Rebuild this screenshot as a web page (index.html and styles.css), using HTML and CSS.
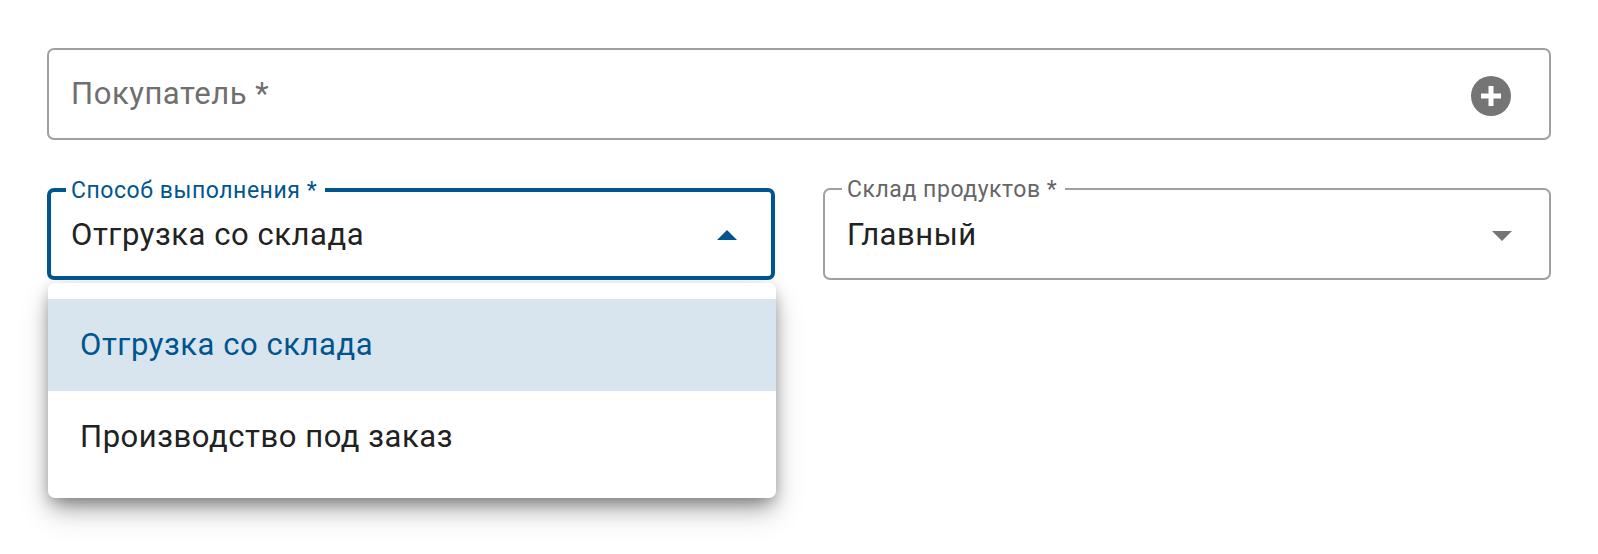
FILE: index.html
```html
<!DOCTYPE html>
<html lang="ru">
<head>
    <meta charset="UTF-8">
    <title>Заказ</title>
    <link rel="stylesheet" href="styles.css">
</head>
<body>
    <div class="form">
        <div class="field field-empty">
            <span class="placeholder">Покупатель *</span>
            <svg class="add-icon" viewBox="0 0 40 40" width="40" height="40">
                <circle cx="20" cy="20" r="20" fill="#757575"/>
                <path d="M17.5 10h5v7.5H30v5h-7.5V30h-5v-7.5H10v-5h7.5z" fill="#fff"/>
            </svg>
        </div>
        <div class="row">
            <div class="select-wrap">
                <fieldset class="field field-focused">
                    <legend>Способ выполнения *</legend>
                    <span class="value">Отгрузка со склада</span>
                    <span class="arrow arrow-up"></span>
                </fieldset>
                <ul class="options">
                    <li class="option is-selected">Отгрузка со склада</li>
                    <li class="option">Производство под заказ</li>
                </ul>
            </div>
            <div class="select-wrap">
                <fieldset class="field">
                    <legend>Склад продуктов *</legend>
                    <span class="value">Главный</span>
                    <span class="arrow arrow-down"></span>
                </fieldset>
            </div>
        </div>
    </div>
</body>
</html>
```

FILE: styles.css
```css
* {
    margin: 0;
    padding: 0;
    box-sizing: border-box;
}
body {
    font-family: Roboto, "Liberation Sans", sans-serif;
    background: #fff;
    color: #212121;
}
ul {
    list-style: none;
}
.form {
    min-height: 100vh;
    padding: 48px 47px 0;
}
.row {
    display: flex;
    align-items: flex-start;
    gap: 48px;
    margin-top: 48px;
}
.select-wrap {
    flex: 1;
    min-width: 0;
}
.field {
    display: flex;
    align-items: center;
    justify-content: space-between;
    height: 92px;
    padding: 0 38px 0 22px;
    border: 2px solid #a0a0a0;
    border-radius: 7px;
    font-size: 31px;
    letter-spacing: 0.55px;
}
.field-focused {
    border: 4px solid #00558f;
    padding: 0 36px 0 20px;
}
fieldset.field {
    display: block;
    position: relative;
    min-width: 0;
}
legend {
    margin-left: -5px;
    padding: 0 8px 0 5px;
    height: 2px;
    line-height: 4px;
    font-size: 23px;
    letter-spacing: 0.55px;
    color: #666;
}
.field-focused legend {
    height: 4px;
    line-height: 6px;
    color: #00558f;
}
.placeholder {
    margin-bottom: 2px;
    color: #6f6f6f;
}
.value {
    display: block;
    line-height: 36px;
    padding-top: 27px;
    color: #222;
}
.field-focused .value {
    padding-top: 25px;
}
.add-icon {
    display: block;
    margin-top: 4px;
}
.arrow {
    position: absolute;
    top: 41px;
    right: 37px;
    width: 0;
    height: 0;
    border-left: 10px solid transparent;
    border-right: 10px solid transparent;
}
.arrow-up {
    top: 38px;
    right: 34px;
    border-bottom: 10px solid #00558f;
}
.arrow-down {
    border-top: 10px solid #757575;
}
.options {
    margin: 3px -1px 0 1px;
    padding: 16px 0;
    background: #fff;
    border-radius: 7px;
    box-shadow: 0 10px 20px -4px rgba(0, 0, 0, 0.42), 0 16px 32px 0 rgba(0, 0, 0, 0.14), 0 2px 12px rgba(0, 0, 0, 0.1);
}
.option {
    height: 91.5px;
    line-height: 92px;
    padding-left: 32px;
    font-size: 31px;
    letter-spacing: 0.55px;
}
.option.is-selected {
    background: #d9e5ee;
    color: #00558f;
}
```
